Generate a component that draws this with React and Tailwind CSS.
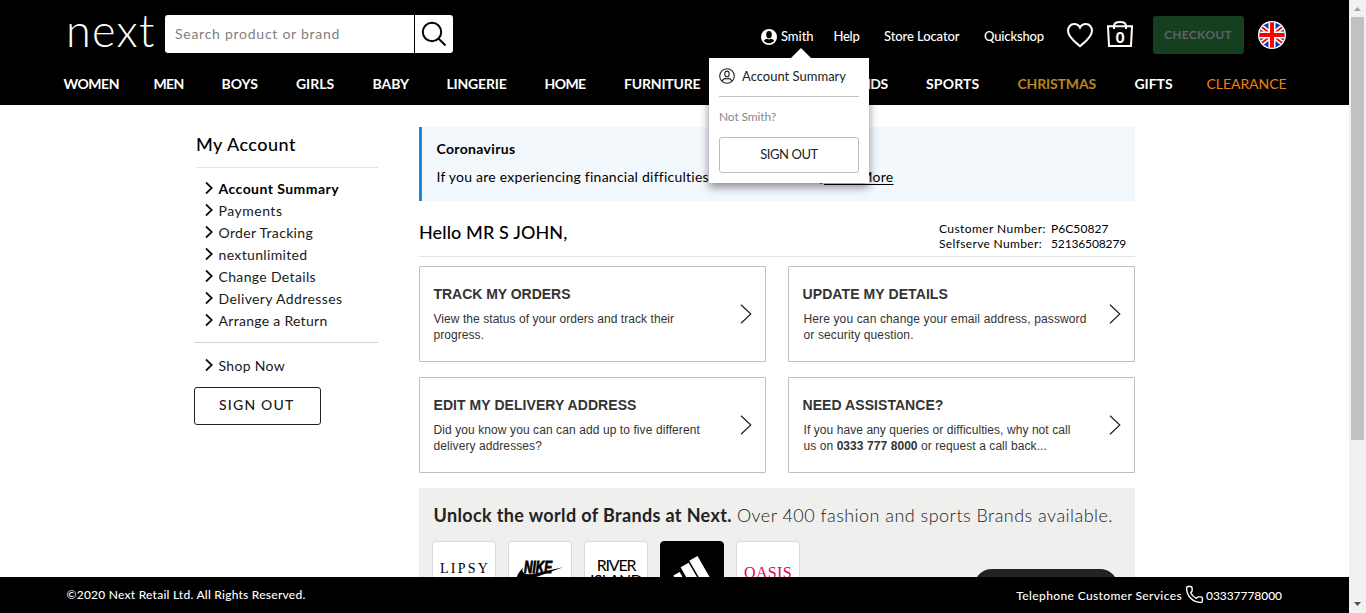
import React from "react";
import { Phone } from "lucide-react";

const navItems = [
  { label: "WOMEN", cls: "ml-[63.5px] w-[90px] tracking-[-0.48px] text-white font-bold" },
  { label: "MEN", cls: "w-[68px] tracking-[-0.7px] text-white font-bold" },
  { label: "BOYS", cls: "w-[74.5px] text-white font-bold" },
  { label: "GIRLS", cls: "w-[76.5px] tracking-[-0.05px] text-white font-bold" },
  { label: "BABY", cls: "w-[74px] tracking-[-0.05px] text-white font-bold" },
  { label: "LINGERIE", cls: "w-[98px] tracking-[-0.2px] text-white font-bold" },
  { label: "HOME", cls: "w-[79.5px] tracking-[-0.6px] text-white font-bold" },
  { label: "FURNITURE", cls: "w-[210px] tracking-[-0.18px] text-white font-bold" },
  { label: "BRANDS", cls: "w-[92px] tracking-[-0.59px] text-white font-bold" },
  { label: "SPORTS", cls: "w-[91.5px] tracking-[0.17px] text-white font-bold" },
  { label: "CHRISTMAS", cls: "w-[117px] tracking-[-0.16px] text-[#b8871b] font-bold" },
  { label: "GIFTS", cls: "w-[72px] tracking-[-0.05px] text-white font-bold" },
  { label: "CLEARANCE", cls: "tracking-[-0.05px] text-[#f0820f]" },
];

const sideItems = [
  { label: "Account Summary", cls: "font-bold tracking-[0.45px] text-black" },
  { label: "Payments", cls: "tracking-[0.51px]" },
  { label: "Order Tracking", cls: "tracking-[0.32px]" },
  { label: "nextunlimited", cls: "tracking-[0.35px]" },
  { label: "Change Details", cls: "tracking-[0.34px]" },
  { label: "Delivery Addresses", cls: "tracking-[0.39px]" },
  { label: "Arrange a Return", cls: "tracking-[0.29px]" },
];

const cards = [
  {
    title: "TRACK MY ORDERS",
    titleCls: "tracking-[-0.03px]",
    cls: "tracking-[0.06px]",
    body: <>View the status of your orders and track their<br />progress.</>,
  },
  {
    title: "UPDATE MY DETAILS",
    titleCls: "tracking-[0.09px]",
    cls: "tracking-[0.13px] pl-px",
    body: <>Here you can change your email address, password<br />or security question.</>,
  },
  {
    title: "EDIT MY DELIVERY ADDRESS",
    titleCls: "tracking-[0.06px]",
    cls: "tracking-[0.09px]",
    body: <>Did you know you can can add up to five different<br />delivery addresses?</>,
  },
  {
    title: "NEED ASSISTANCE?",
    titleCls: "tracking-[0.06px]",
    cls: "tracking-[0.07px] pl-px",
    body: <>If you have any queries or difficulties, why not call<br />us on <b>0333 777 8000</b> or request a call back...</>,
  },
];

function Logo() {
  return (
    <div className="mt-[7px] ml-[66px] w-[99px] text-[45px] leading-[46px] font-light tracking-[1.3px] text-white">next</div>
  );
}

function SearchBar() {
  return (
    <div className="mt-[15px] flex h-[38px] w-[288px] overflow-hidden rounded-[3px] bg-white">
      <div className="w-[249px] pl-[10px] text-[14px] leading-[37px] tracking-[0.74px] text-[#808080]">Search product or brand</div>
      <div className="flex flex-1 items-center justify-center border-l border-black">
        <svg width="26" height="26" viewBox="0 0 26 26" fill="none" stroke="#000" strokeWidth="2">
          <circle cx="11" cy="11" r="9.2" />
          <path d="M17.6 17.6 24.5 24.5" />
        </svg>
      </div>
    </div>
  );
}

function UserBadge() {
  return (
    <svg className="mt-[29px] mr-1" width="16" height="16" viewBox="0 0 16 16">
      <circle cx="8" cy="8" r="8" fill="#fff" />
      <ellipse cx="8" cy="5.7" rx="2.8" ry="3.6" fill="#000" />
      <path d="M2.8 11.8C3.600 10.400 5 10 6.300 9.800c1 .7 2.400.7 3.400 0 1.300.2 2.700.6 3.500 2C12 13.400 10.200 14.200 8 14.200s-4-.8-5.200-2.400z" fill="#000" />
    </svg>
  );
}

function UserOutline() {
  return (
    <svg width="16" height="16" viewBox="0 0 16 16" fill="none" stroke="#222" strokeWidth="1.1">
      <circle cx="8" cy="8" r="7.3" />
      <ellipse cx="8" cy="5.9" rx="2.2" ry="2.8" />
      <path d="M3 13c.8-1.8 2.2-2.3 3.8-2.6.7.5 1.7.5 2.4 0 1.6.3 3 .8 3.8 2.6" />
    </svg>
  );
}

function Heart() {
  return (
    <svg className="mt-[22px] ml-[22px]" width="28" height="27" viewBox="0 0 28 27" fill="none" stroke="#fff" strokeWidth="2">
      <path d="M14 24.2C10 20.5 2 15.5 2 8.800 2 5 4.600 2 8.100 2c2.700 0 4.900 1.500 5.900 3.600C15 3.500 17.200 2 19.900 2 23.400 2 26 5 26 8.800c0 6.700-8 11.700-12 15.400z" />
    </svg>
  );
}

function Bag() {
  return (
    <div className="relative mt-[20px] ml-[12px] h-7 w-7">
      <svg width="28" height="28" viewBox="0 0 28 28" fill="none" stroke="#fff" strokeWidth="2">
        <path d="M2 6.200h24l-1 19.700H3z" />
        <path d="M8 9V6.300C8 3.600 10.300 2 14 2s6 1.600 6 4.300V9" />
      </svg>
      <span className="absolute inset-x-0 top-[8px] text-center text-[15px] leading-[18px] font-black text-white">0</span>
    </div>
  );
}

function Flag() {
  return (
    <svg className="mt-[21px] ml-[14px]" width="28" height="28" viewBox="0 0 28 28">
      <defs>
        <clipPath id="disc"><circle cx="14" cy="14" r="12.6" /></clipPath>
      </defs>
      <circle cx="14" cy="14" r="14" fill="#fff" />
      <g clipPath="url(#disc)">
        <rect width="28" height="28" fill="#0c3ba0" />
        <path d="M0 3 28 25M28 3 0 25" stroke="#fff" strokeWidth="5" />
        <path d="M0 3 28 25M28 3 0 25" stroke="#f00" strokeWidth="1.8" />
        <path d="M14 0v28M0 14h28" stroke="#fff" strokeWidth="7" />
        <path d="M14 0v28M0 14h28" stroke="#f00" strokeWidth="4" />
      </g>
    </svg>
  );
}

function AccountMenu() {
  return (
    <div className="absolute top-[58px] left-[709px] z-20 h-[125px] w-[160px] bg-white px-[10px] shadow-[0_4px_9px_rgba(0,0,0,0.45)]">
      <svg className="absolute -top-[10px] left-[82px]" width="20" height="10" viewBox="0 0 20 10">
        <path d="M0 10 10 0 20 10z" fill="#fff" />
      </svg>
      <div className="flex h-[39px] items-center gap-[7px] border-b border-[#c4c4c4] pb-[3px] text-[13px] leading-5 text-[#222]">
        <UserOutline />
        <span>Account Summary</span>
      </div>
      <div className="mt-[10px] text-[12px] leading-5 tracking-[-0.13px] text-[#888]">Not Smith?</div>
      <div className="mt-[10px] flex h-9 items-center justify-center rounded-[3px] border border-[#bdbdbd] pb-px text-[13px] tracking-[-0.45px] text-[#222]">SIGN OUT</div>
    </div>
  );
}

function Header() {
  return (
    <header className="h-[105px] shrink-0 bg-black">
      <div className="flex h-[74px] items-start whitespace-nowrap text-white">
        <Logo />
        <SearchBar />
        <div className="ml-[308px] flex text-[13px] font-medium">
          <UserBadge />
          <span className="mt-[26px] w-[52.5px] leading-5 tracking-[-0.07px]">Smith</span>
          <span className="mt-[26px] w-[50.5px] leading-5 tracking-[-0.27px]">Help</span>
          <span className="mt-[26px] w-[100px] leading-5 tracking-[-0.09px]">Store Locator</span>
          <span className="mt-[26px] w-[60px] leading-5 tracking-[-0.15px]">Quickshop</span>
        </div>
        <Heart />
        <Bag />
        <div className="mt-4 ml-[19px] h-[38px] w-[91px] rounded-[3px] bg-[#14401f] pl-[11px] text-[12px] leading-[37px] font-bold tracking-[0.32px] text-[#626262]">CHECKOUT</div>
        <Flag />
      </div>
      <nav className="flex text-[14px] leading-5 whitespace-nowrap">
        {navItems.map((n) => (
          <span key={n.label} className={`shrink-0 ${n.cls}`}>{n.label}</span>
        ))}
      </nav>
    </header>
  );
}

function SideLink({ label, cls }) {
  return (
    <li className="flex h-[22px] items-start pl-[11px]">
      <svg className="mt-[2.5px] mr-[5.5px]" width="8" height="14" viewBox="0 0 8 14" fill="none" stroke="#111" strokeWidth="1.8">
        <path d="M1 1.5 6.800 7 1 12.500" />
      </svg>
      <span className={cls}>{label}</span>
    </li>
  );
}

function Sidebar() {
  return (
    <aside className="ml-[194px] w-[184px] shrink-0 pt-[27px] text-[14px] leading-[22px] text-[#1a1a1a]">
      <h2 className="ml-[2px] h-[36px] border-b border-[#e3e3e3] text-[18px] leading-6 font-medium tracking-[0.49px] text-black">My Account</h2>
      <ul className="border-b border-[#cdd3d9] py-[10px]">
        {sideItems.map((s) => <SideLink key={s.label} {...s} />)}
      </ul>
      <ul className="pt-[12px]">
        <SideLink label="Shop Now" cls="tracking-[0.32px]" />
      </ul>
      <div className="mt-[10px] h-[38px] w-[127px] rounded-[3px] border border-[#222] pl-6 leading-[34px] font-medium tracking-[1.2px]">SIGN OUT</div>
    </aside>
  );
}

function Card({ title, titleCls, cls, body }) {
  return (
    <div className="flex h-24 items-center justify-between rounded-[1px] border border-[#bfbfbf] pr-[13px] pl-[13.5px] font-['Liberation_Sans',sans-serif] whitespace-nowrap text-[#333]">
      <div className="self-start pt-[17px]">
        <h3 className={`text-[14px] leading-5 font-bold ${titleCls}`}>{title}</h3>
        <p className={`mt-[7px] text-[12px] leading-4 ${cls}`}>{body}</p>
      </div>
      <svg width="12" height="20" viewBox="0 0 12 20" fill="none" stroke="#222" strokeWidth="1.2">
        <path d="M1 .8 10.800 10 1 19.200" />
      </svg>
    </div>
  );
}

function Tile({ children, dark }) {
  return (
    <div className={`flex h-16 w-16 shrink-0 flex-col items-center overflow-hidden rounded-[4px] border ${dark ? "border-black bg-black" : "border-[#d9d9d9] bg-white"}`}>
      {children}
    </div>
  );
}

function Brands() {
  return (
    <section className="mt-[15px] h-[130px] bg-[#efefee] pt-[15px] whitespace-nowrap text-[#222]">
      <div className="pl-[14.5px] text-[18px] leading-6">
        <b className="tracking-[0.36px]">Unlock the world of Brands at Next.</b>
        <span className="ml-[5px] font-light tracking-[0.46px]">Over 400 fashion and sports Brands available.</span>
      </div>
      <div className="mt-[14px] flex gap-3 pl-[13px]">
        <Tile>
          <div className="mt-[19px] pl-[2px] font-['Liberation_Serif',serif] text-[14px] leading-4 font-medium tracking-[2.2px] text-black">LIPSY</div>
          <div className="text-[5px] leading-[5px] tracking-[1px] text-[#333]">LONDON</div>
        </Tile>
        <Tile>
          <svg width="62" height="62" viewBox="0 0 62 62">
            <text x="15" y="30.5" fontFamily="'Liberation Sans Narrow', 'Liberation Sans', sans-serif" fontWeight="700" fontStyle="italic" fontSize="16" textLength="28" lengthAdjust="spacingAndGlyphs" stroke="#000" strokeWidth=".9">NIKE</text>
            <path d="M14 25.500C9 31 5.500 37 9 39.500c3.500 2 10-.5 17-4L54 25.300 27 31.300c-9 2.500-15.500.5-13-5.800z" />
          </svg>
        </Tile>
        <Tile>
          <div className="mt-[14px] text-[16px] leading-[18px] tracking-[-1.2px] text-black">RIVER</div>
          <div className="-mt-[3px] text-[16px] leading-[18px] tracking-[-0.8px] text-black">ISLAND</div>
        </Tile>
        <Tile dark>
          <svg width="62" height="62" viewBox="0 0 62 62" fill="#fff">
            <path d="M28.300 18.700 36.500 14 52 41H41.200z" />
            <path d="M19.600 25.300 27.700 20.700 39.400 41H28.600z" />
            <path d="M12.300 33.600 18.700 30 25 41H16.500z" />
          </svg>
        </Tile>
        <Tile>
          <div className="mt-[21px] font-['Liberation_Serif',serif] text-[16px] leading-5 tracking-[0.35px] text-[#e5004f]">OASIS</div>
        </Tile>
        <div className="mt-[28px] ml-[162px] h-9 w-[144px] rounded-[18px] bg-[#222]" />
      </div>
    </section>
  );
}

function Content() {
  return (
    <div className="ml-[41px] w-[716px] shrink-0 pt-[22px]">
      <div className="h-[74px] border-l-[3px] border-[#1e86d9] bg-[#f3f8fd] pt-[12px] pl-[14.5px] text-[14px] leading-5 whitespace-nowrap text-black">
        <div className="font-bold tracking-[0.34px]">Coronavirus</div>
        <div className="mt-2 flex">
          <span className="w-[387.5px] tracking-[0.24px]">If you are experiencing financial difficulties we're here to help.</span>
          <span className="underline underline-offset-2 tracking-[0.28px]">Read More</span>
        </div>
      </div>
      <div className="flex h-[56px] justify-between border-b border-[#e3e3e3] pt-[19px] pr-[8px] text-black">
        <h1 className="text-[18px] leading-6 font-medium tracking-[0.11px]">Hello MR S JOHN,</h1>
        <div className="mt-px grid h-[30px] w-[188px] grid-cols-[112px_1fr] text-[12px] leading-[15px] whitespace-nowrap">
          <span className="tracking-[0.42px]">Customer Number:</span>
          <span className="tracking-[0.06px]">P6C50827</span>
          <span className="tracking-[0.34px]">Selfserve Number:</span>
          <span className="tracking-[-0.14px]">52136508279</span>
        </div>
      </div>
      <div className="mt-[9px] grid grid-cols-[347px_347px] gap-x-[22px] gap-y-[15px]">
        {cards.map((c) => <Card key={c.title} {...c} />)}
      </div>
      <Brands />
    </div>
  );
}

function Footer() {
  return (
    <footer className="flex h-9 shrink-0 items-center justify-between bg-black pr-[67px] pl-[66.5px] text-[12px] font-medium whitespace-nowrap text-white">
      <span className="tracking-[0.24px]">©2020 Next Retail Ltd. All Rights Reserved.</span>
      <span className="flex items-center">
        <span className="pt-[2px] tracking-[0.37px]">Telephone Customer Services</span>
        <Phone className="mr-[2px] mb-px ml-[3px]" size={19} strokeWidth={1.8} />
        <span className="pt-[2px] tracking-[-0.05px]">03337778000</span>
      </span>
    </footer>
  );
}

function Scrollbar() {
  return (
    <div className="flex w-[17px] shrink-0 flex-col items-center justify-between bg-[#f1f1f1]">
      <div className="flex flex-col items-center">
        <svg width="17" height="17" viewBox="0 0 17 17"><path d="M5 11 8.500 7 12 11z" fill="#a3a3a3" /></svg>
        <div className="h-[423px] w-[13px] bg-[#c1c1c1]" />
      </div>
      <svg width="17" height="17" viewBox="0 0 17 17"><path d="M5 6 8.500 10 12 6z" fill="#505050" /></svg>
    </div>
  );
}

export default function App() {
  return (
    <div className="relative flex h-[613px] w-[1366px] overflow-hidden bg-white font-['Lato',sans-serif]">
      <div className="flex min-w-0 flex-1 flex-col">
        <Header />
        <main className="flex min-h-0 flex-1 items-start overflow-hidden">
          <Sidebar />
          <Content />
        </main>
        <Footer />
      </div>
      <Scrollbar />
      <AccountMenu />
    </div>
  );
}
